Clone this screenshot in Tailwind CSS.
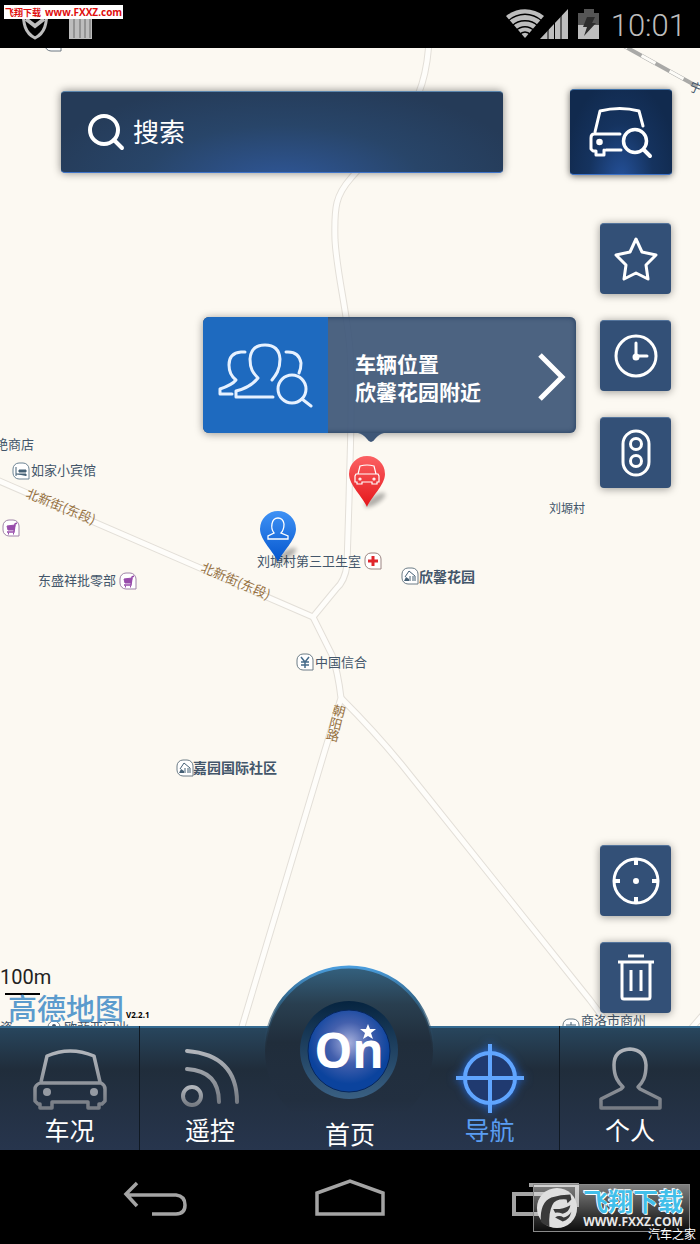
<!DOCTYPE html>
<html lang="zh-CN">
<head>
    <meta charset="UTF-8">
    <meta name="viewport" content="width=device-width, initial-scale=1.0">
    <title>导航</title>
    <script src="https://cdn.jsdelivr.net/npm/@tailwindcss/browser@4"></script>
</head>
<body class="flex min-h-screen flex-col bg-black font-['Roboto','Noto_Sans_CJK_SC',sans-serif] text-white">

    <!-- Status bar -->
    <header class="relative flex h-12 items-center justify-between pr-3.5 pl-5">
        <div class="flex items-center gap-4">
            <svg class="h-10 w-8" viewBox="0 0 32 40" fill="none" stroke="#bdbdbd" stroke-width="3">
                <path d="M3 4 C3 20 5 29 15 34 C25 29 27 20 27 4"/>
                <path d="M6 15 L15 22 L24 15" stroke-width="4"/>
            </svg>
            <svg class="h-10 w-6" viewBox="0 0 24 40">
                <path d="M1 8h23v27H1z" fill="#bdbdbd"/>
                <path d="M6 8v26M12 8v26M17 8v26M22 8v26" stroke="#6a6a6a"/>
            </svg>
        </div>
        <div class="flex items-center gap-1">
            <svg class="-ml-1 h-8 w-[98px]" viewBox="0 0 98 32">
                <path d="M19 30 L0 8 C11 -1 27 -1 38 8 Z" fill="#bdbdbd"/>
                <g fill="none" stroke="#000" stroke-width="1.300">
                    <path d="M2 13 C12 4 26 4 36 13"/>
                    <path d="M6 18 C13 11 25 11 32 18"/>
                    <path d="M10 22.500 C15 17.500 23 17.500 28 22.500"/>
                    <path d="M13 27 C17 23 21 23 25 27"/>
                </g>
                <path d="M34 31 L62 1 V31 Z" fill="#bdbdbd"/>
                <path d="M42 16v16 M48.500 10v22 M55 4v28" stroke="#000"/>
                <path d="M72 5h6V1h10v4h5v12H72z" fill="#555"/>
                <path d="M72 17h21v14H72z" fill="#bdbdbd"/>
                <path d="M81 9h8l-3 6h4L78 28l3-9h-4z" fill="#2c2c2c"/>
            </svg>
            <time class="w-[78px] pt-1 text-right text-[31px] leading-10 font-light text-[#bdbdbd]">10:01</time>
        </div>
        <p class="absolute top-[5px] left-1 flex h-3.5 items-center gap-1 bg-white px-px font-['Open_Sans','Noto_Sans_CJK_SC',sans-serif] text-[10px] leading-none font-bold whitespace-nowrap text-[#e00d0d]">
            <span class="text-[9px]">飞翔下载</span><span>www.FXXZ.com</span>
        </p>
    </header>

    <!-- Map -->
    <main class="relative flex flex-1 flex-col overflow-hidden bg-[#fcf9f2]">
        <svg class="absolute inset-0 h-full w-full" viewBox="0 48 700 978" preserveAspectRatio="xMidYMid slice" font-family="Noto Sans CJK SC, sans-serif" font-size="13" fill="#43566a">
            <defs>
                <g id="roads" fill="none" stroke-linejoin="round">
                    <path d="M429 40 C428 62 425 78 418 95 C402 130 370 155 351 178 C336 195 334 206 335 240 C337 275 347 310 350 350 C353 400 350 450 349 500 L347 565 Q345 581 336 589 L313 617 L-10 477"/>
                    <path d="M313 617 L332 655 Q338 672 341 698 L325 750 L241 1030"/>
                    <path d="M341 698 Q375 732 402 765 L590 1000 L620 1040"/>
                    <path d="M720 995 L690 1030"/>
                </g>
                <path id="badge" d="M7 1h4a6 6 0 0 1 6 6v10H7a6 6 0 0 1-6-6V7a6 6 0 0 1 6-6z" fill="#fff" stroke="currentColor"/>
                <g id="cart" fill="none" stroke="#984cab">
                    <path d="M5 7l8-1-1 5H6z" fill="#984cab"/>
                    <path d="M15 4l-2 1-1 8H5" stroke-width="1.500"/>
                    <path d="M6 14.500h1M11 14.500h1" stroke-width="2"/>
                </g>
                <g id="house">
                    <path d="M4 10l4-6 6 5v5M9 9v5M12 9v5" fill="none" stroke="#456075"/>
                    <path d="M3 14l2-4 3 2v2z" fill="#456075"/>
                </g>
                <linearGradient id="red" x2="0" y2="1"><stop stop-color="#fb6163"/><stop offset="1" stop-color="#e5161b"/></linearGradient>
                <linearGradient id="blue" x2="0" y2="1"><stop stop-color="#3f92f5"/><stop offset="1" stop-color="#0455cd"/></linearGradient>
                <filter id="soft" x="-50%" y="-50%" width="200%" height="200%"><feGaussianBlur stdDeviation="2"/></filter>
            </defs>

            <use href="#roads" stroke="#e3dfd8" stroke-width="7"/>
            <use href="#roads" stroke="#fefdfa" stroke-width="5"/>

            <!-- Railway -->
            <path d="M624 46 L700 88" stroke="#a9a9a7" stroke-width="4"/>
            <path d="M624 46 L700 88" stroke="#fdfcf8" stroke-width="3" stroke-dasharray="16 16" stroke-dashoffset="-20"/>
            <text transform="translate(688 90) rotate(22)">宁</text>

            <g fill="#96713f">
                <text transform="translate(25 497) rotate(22)">北新街(东段)</text>
                <text transform="translate(200 571) rotate(23)">北新街(东段)</text>
                <g transform="translate(339 711) rotate(14)" text-anchor="middle">
                    <text y="5">朝</text><text y="18">阳</text><text y="30">路</text>
                </g>
            </g>

            <use href="#badge" x="44" y="34" color="#6b7680"/>
            <text x="65" y="46">东盛祥批部</text>
            <text x="-5" y="449">艳商店</text>
            <g transform="translate(12 462)">
                <use href="#badge" color="#6d8494"/>
                <path d="M4 5v9M4 12h10v2M7 8h7v2H7z" fill="#456075" stroke="#456075"/>
            </g>
            <text x="31" y="475">如家小宾馆</text>
            <g transform="translate(2 519)"><use href="#badge" color="#a084a8"/><use href="#cart"/></g>
            <g transform="translate(119 572)"><use href="#badge" color="#a084a8"/><use href="#cart"/></g>
            <text x="38" y="585">东盛祥批零部</text>
            <text x="257" y="566">刘塬村第三卫生室</text>
            <g transform="translate(364 552)">
                <use href="#badge" color="#9c8683"/>
                <path d="M9 4v10M4 9h10" stroke="#e0262d" stroke-width="3"/>
            </g>
            <text x="549" y="513" font-size="12">刘塬村</text>
            <g transform="translate(401 567)"><use href="#badge" color="#6d7d87"/><use href="#house"/></g>
            <text x="419" y="582" font-size="14" font-weight="700">欣馨花园</text>
            <g transform="translate(296 653)">
                <use href="#badge" color="#6d7d87"/>
                <path d="M5 4l4 5 4-5M9 9v6M5 9h8M5 12h8" fill="none" stroke="#456b8b" stroke-width="1.500"/>
            </g>
            <text x="315" y="667">中国信合</text>
            <g transform="translate(176 759)"><use href="#badge" color="#6d7d87"/><use href="#house"/></g>
            <text x="193" y="773" font-size="14" font-weight="700">嘉园国际社区</text>
            <text x="0" y="1032">瓷</text>
            <circle cx="54" cy="1027" r="6" fill="#fff" stroke="#6d7d87"/>
            <circle cx="54" cy="1026" r="2"/>
            <text x="64" y="1032">欧菲亚门业</text>
            <g transform="translate(562 1018)">
                <use href="#badge" color="#6d7d87"/>
                <path d="M4 7h10M9 4v3M6 10h6" stroke="#456075"/>
            </g>
            <text x="581" y="1025">商洛市商州</text>

            <!-- My position -->
            <ellipse cx="286" cy="555" rx="12" ry="4" transform="rotate(-32 286 555)" fill="#000" opacity=".3" filter="url(#soft)"/>
            <path d="M278 562 C274 552 260 540 260 529 a18 18 0 0 1 36 0 C296 540 282 552 278 562z" fill="url(#blue)"/>
            <path d="M274 533 C271 529 272 524 272 524 Q273 518 278 518 Q283 518 284 524 Q284 530 281 533 L288 536 V539 H268 V536z" fill="none" stroke="#fff" stroke-width="1.300"/>

            <!-- Vehicle position -->
            <ellipse cx="375" cy="500" rx="12" ry="4" transform="rotate(-32 375 500)" fill="#000" opacity=".3" filter="url(#soft)"/>
            <path d="M367 507 C363 497 349 485 349 474 a18 18 0 0 1 36 0 C385 485 371 497 367 507z" fill="url(#red)"/>
            <g fill="none" stroke="#fff" stroke-width="1.200">
                <path d="M358 474l2-8q7-2 14 0l2 8M356 474h22l1 2v6h-2v2h-5v-2h-10v2h-5v-2h-2v-6z"/>
                <circle cx="360" cy="479" r="1"/><circle cx="374" cy="479" r="1"/>
            </g>
        </svg>

        <!-- Search row -->
        <div class="relative mt-[41px] flex items-center justify-between pr-7 pl-[61px]">
            <form class="mr-[67px] flex h-[82px] flex-1 items-center gap-2 rounded-sm border-t border-b border-t-[#5c86ad] border-b-[#3f74c9] bg-[#28405e] bg-radial-[at_50%_115%] from-[#2f5799] via-[#284569] via-45% to-[#253b58] to-80% pl-[26px] shadow-[0_0_8px_#00000077]">
                <svg class="h-10 w-[38px] shrink-0" viewBox="0 0 38 40" fill="none" stroke="#fff" stroke-width="4" stroke-linecap="round">
                    <circle cx="17" cy="18" r="14"/><path d="M27 28l8 8"/>
                </svg>
                <input type="search" aria-label="搜索" placeholder="搜索" class="h-full min-w-0 flex-1 bg-transparent pt-0.5 text-[26px] text-white outline-none placeholder:text-white">
            </form>
            <button type="button" aria-label="查找车辆" class="flex h-[86px] w-[102px] items-center justify-center rounded-sm border-t border-b border-t-[#3f71a8] border-b-[#3f74c9] bg-[#122c52] bg-radial-[at_50%_110%] from-[#25529c] via-[#15335f] via-45% to-[#112a4e] to-80% shadow-[0_1px_7px_#00000099]">
                <svg class="h-[58px] w-[68px]" viewBox="587 103 68 58" fill="none" stroke="#fff" stroke-width="3" stroke-linecap="round" stroke-linejoin="round">
                    <path d="M595 132l5-21q20-5 39 0l4 15M620 134h-26q-3 0-3 4v11l2 2h3v4h8v-5M606 150h15"/>
                    <circle cx="599.500" cy="142" r="1.800" fill="#fff"/>
                    <circle cx="635" cy="141" r="11.500" stroke-width="3.500"/><path d="M644 150l6 6" stroke-width="4"/>
                </svg>
            </button>
        </div>

        <!-- Map tools -->
        <div class="relative mt-12 mr-[29px] flex flex-col gap-[26px] self-end">
            <button type="button" aria-label="收藏" class="flex size-[71px] items-center justify-center rounded-sm border-t border-[#54749c] bg-[#335077] shadow-[0_1px_8px_#00000066]">
                <svg class="size-12" viewBox="0 0 48 48" fill="none" stroke="#fff" stroke-width="3" stroke-linejoin="round"><path d="M24 4l6 13 14 3-10 10 2 14-12-6-12 6 2-14L4 20l14-3z"/></svg>
            </button>
            <button type="button" aria-label="历史" class="flex size-[71px] items-center justify-center rounded-sm border-t border-[#54749c] bg-[#335077] shadow-[0_1px_8px_#00000066]">
                <svg class="size-12" viewBox="0 0 48 48" fill="none" stroke="#fff" stroke-width="3" stroke-linecap="round"><circle cx="24" cy="24" r="20"/><path d="M24 11v13h11"/><circle cx="24" cy="25" r="2" fill="#fff"/></svg>
            </button>
            <button type="button" aria-label="路况" class="flex size-[71px] items-center justify-center rounded-sm border-t border-[#54749c] bg-[#335077] shadow-[0_1px_8px_#00000066]">
                <svg class="size-12" viewBox="0 0 48 48" fill="none" stroke="#fff" stroke-width="3"><rect x="11" y="2" width="26" height="44" rx="13"/><circle cx="24" cy="15" r="5.500"/><circle cx="24" cy="32" r="5.500"/></svg>
            </button>
        </div>

        <!-- Scale, map logo, lower tools -->
        <div class="relative mt-auto mr-[29px] flex items-end justify-between pb-[13px]">
            <div class="-mb-2">
                <p class="text-xl leading-6 text-[#222]">100m</p>
                <div class="mt-1 ml-[5px] h-0.5 w-[35px] bg-black"></div>
                <p class="-mt-0.5 flex items-end pl-2 text-[29px] leading-7 font-medium text-[#5b9bcd]">
                    <span class="font-['Noto_Sans_CJK_SC',sans-serif]">高德地图</span>
                    <span class="ml-0.5 font-['Open_Sans',sans-serif] text-[8px] leading-3 font-bold text-black">V2.2.1</span>
                </p>
            </div>
            <div class="flex flex-col gap-[26px]">
                <button type="button" aria-label="定位" class="flex size-[71px] items-center justify-center rounded-sm border-t border-[#54749c] bg-[#335077] shadow-[0_1px_8px_#00000066]">
                    <svg class="size-12" viewBox="0 0 48 48" fill="none" stroke="#fff" stroke-width="3"><circle cx="24" cy="24" r="22"/><path d="M24 2v6M24 40v6M2 24h6M40 24h6" stroke-width="4"/><circle cx="24" cy="24" r="2" fill="#fff" stroke-width="2"/></svg>
                </button>
                <button type="button" aria-label="清除" class="flex size-[71px] items-center justify-center rounded-sm border-t border-[#54749c] bg-[#335077] shadow-[0_1px_8px_#00000066]">
                    <svg class="size-12" viewBox="0 0 48 48" fill="none" stroke="#fff" stroke-width="3" stroke-linejoin="round"><path d="M16 2h16M6 8h36M10 8v35q0 2 2 2h24q2 0 2-2V8M19 16v21M29 16v21"/></svg>
                </button>
            </div>
        </div>

        <!-- Vehicle callout -->
        <a href="#" class="absolute top-[269px] left-[203px] flex h-[116px] w-[373px] items-center rounded-md bg-[#3d5677]/92 shadow-[0_1px_9px_#00000066,inset_0_0_5px_#213a5c]">
            <span class="flex h-full w-[125px] items-center justify-center rounded-l-md bg-[#1e6abf]">
                <svg class="h-[66px] w-[98px]" viewBox="0 0 98 66" fill="none" stroke="#e6f1ff" stroke-width="3" stroke-linecap="round" stroke-linejoin="round">
                    <path d="M28 10h-4q-12 1-12 13c0 8 3 12 7 15q-4 5-16 9v5h12"/>
                    <path d="M56 55H19v-6c12-3 18-8 22-13-5-5-8-9-8-19Q34 3 48 3q14 0 15 14c0 11-4 16-8 21"/>
                    <path d="M69 10q13-1 15 11 0 6-2 10"/>
                    <circle cx="75" cy="47" r="14"/><path d="M85 57l9 7"/>
                </svg>
            </span>
            <span class="ml-[27px] flex-1 pt-2 text-[21px] leading-7 font-bold">车辆位置<br>欣馨花园附近</span>
            <svg class="mt-1 mr-2.5 h-12 w-7" viewBox="0 0 28 48" fill="none" stroke="#fff" stroke-width="5"><path d="M2 2l22 22L2 46"/></svg>
            <svg class="absolute top-full left-[155px] h-2.5 w-[26px]" viewBox="0 0 26 10"><path d="M0 0h26q-5 1-9 6-4 6-8 0-4-5-9-6z" fill="#3d5677"/></svg>
        </a>
    </main>

    <!-- Tab bar -->
    <nav class="relative grid h-[124px] grid-cols-5 bg-linear-to-b from-[#28475f] via-[#202d3b] via-35% to-[#27354d] text-[25px] leading-8 shadow-[inset_0_2px_0_#356b91]">
        <svg class="absolute size-0">
            <linearGradient id="metal" x2="0" y2="1"><stop stop-color="#b1b5bb"/><stop offset="1" stop-color="#777c84"/></linearGradient>
        </svg>
        <a href="#" class="flex flex-col items-center justify-end border-r border-[#101923] pb-0.5">
            <svg class="h-[70px] w-[76px]" viewBox="33 1046 76 70" fill="none" stroke="url(#metal)" stroke-width="3.500" stroke-linejoin="round">
                <path d="M42 1082l6-26q23-10 47 0l6 26M41 1083h61q4 2 4 6v12l-3 3h-3v4H89v-6H53v6H41v-4h-2l-3-3v-12q0-4 5-6z"/>
                <g fill="#959aa2" stroke="none"><circle cx="48" cy="1092" r="4"/><circle cx="95" cy="1092" r="4"/></g>
            </svg>
            车况
        </a>
        <a href="#" class="flex flex-col items-center justify-end pb-0.5">
            <svg class="h-[70px] w-[60px]" viewBox="180 1046 60 70" fill="none" stroke="url(#metal)" stroke-width="4" stroke-linecap="round">
                <circle cx="192" cy="1096" r="9"/><path d="M187 1069q32 2 32 33M187 1051q50 4 50 51"/>
            </svg>
            遥控
        </a>
        <a href="#" class="relative z-10 flex flex-col items-center justify-end">
            <svg class="absolute -top-[64px] left-1/2 h-[180px] w-[184px] -translate-x-1/2" viewBox="-91 -89 184 180">
                <defs>
                    <linearGradient id="dome" x2="0" y2="1"><stop stop-color="#34617f"/><stop offset=".22" stop-color="#293f50"/><stop offset=".45" stop-color="#202d3b"/><stop offset=".8" stop-color="#222f40"/><stop offset="1" stop-color="#27354d" stop-opacity="0"/></linearGradient>
                    <linearGradient id="rim" x2="0" y2="1"><stop stop-color="#4a9ddd"/><stop offset=".2" stop-color="#316386"/><stop offset=".5" stop-color="#263b4e" stop-opacity="0"/></linearGradient>
                    <linearGradient id="ring" x2="0" y2="1"><stop stop-color="#062440"/><stop offset="1" stop-color="#3a6083"/></linearGradient>
                    <radialGradient id="ball" cy=".4"><stop stop-color="#a7b1dd"/><stop offset=".5" stop-color="#4460ad"/><stop offset="1" stop-color="#0b439d"/></radialGradient>
                </defs>
                <circle r="84" fill="url(#dome)" stroke="url(#rim)" stroke-width="3"/>
                <circle cy="-1" r="49" fill="url(#ring)"/>
                <circle r="41" fill="url(#ball)" stroke="#06265c"/>
                <text x="0" y="17" text-anchor="middle" font-family="Open Sans, sans-serif" font-size="48" font-weight="700" fill="#fff">On</text>
                <path d="M19-27l2 5 6 0-5 4 2 6-5-3-5 3 2-6-5-4 6 0z" fill="#fff"/>
            </svg>
            <span class="relative -mb-0.5">首页</span>
        </a>
        <a href="#" aria-current="page" class="flex flex-col items-center justify-end border-r border-[#101923] pb-0.5 text-[#5a9df2]">
            <svg class="h-[70px] w-[76px] overflow-visible drop-shadow-[0_0_5px_#2368d8]" viewBox="-38 -32 76 70" fill="none" stroke="#60a5ff" stroke-width="4">
                <circle r="25" fill="#203a70"/><path d="M-34 0h68M0-34v69"/>
            </svg>
            导航
        </a>
        <a href="#" class="flex flex-col items-center justify-end pb-0.5">
            <svg class="h-[70px] w-[66px]" viewBox="597 1046 66 70" fill="none" stroke="url(#metal)" stroke-width="3.500" stroke-linejoin="round">
                <path d="M630 1049q-16 1-16 16c0 12 4 17 9 22l-2 2-20 10v9h59v-9l-20-10-2-2c5-5 8-10 8-22q-1-15-16-16z"/>
            </svg>
            个人
        </a>
    </nav>

    <!-- System buttons -->
    <footer class="relative grid h-[94px] grid-cols-3 items-center justify-items-center px-[58px] pt-1">
        <button type="button" aria-label="返回">
            <svg class="h-10 w-[66px]" viewBox="122 1180 66 40" fill="none" stroke="#a4a4a4" stroke-width="3.500"><path d="M137 1184l-11 11 11 12M126 1196h50q9 1 9 10 0 9-9 9h-24"/></svg>
        </button>
        <button type="button" aria-label="主页">
            <svg class="h-10 w-[72px]" viewBox="314 1180 72 40" fill="none" stroke="#a4a4a4" stroke-width="3.500"><path d="M317 1215v-21l33-12 33 12v21z"/></svg>
        </button>
        <button type="button" aria-label="最近任务">
            <svg class="h-10 w-[70px]" viewBox="511 1180 70 40" fill="none" stroke="#a4a4a4" stroke-width="4"><path d="M515 1195h50v20h-50zM530 1186h48v22"/></svg>
        </button>
        <div class="absolute right-2.5 bottom-3 flex h-12 w-[157px] items-center gap-1 border border-[#8a8a8a] bg-linear-to-b from-white/50 to-white/5 pl-0.5 whitespace-nowrap">
            <svg class="h-[46px] w-[43px] shrink-0" viewBox="0 0 45 46">
                <circle cx="22" cy="23" r="21" fill="#dfdfdf"/>
                <path d="M5 37q-1-20 11-25 10-3 20-3l1 5-4 4-1-4q-12-1-15 6-4 8-3 22-6-1-9-5z" fill="#3a3a3a"/>
                <path d="M18 24q9 1 18-4-1 7-8 9-5-2-8-1zM20 33q4-3 9 0 5-1 8-6-2 9-9 10z" fill="#3a3a3a"/>
            </svg>
            <div class="text-center font-bold">
                <p class="font-['Noto_Sans_CJK_SC',sans-serif] text-[25px] leading-7 text-[#42bfea] [text-shadow:0_0_1px_#fff,1px_1px_0_#fff,-1px_-1px_0_#fff]">飞翔下载</p>
                <p class="font-['Open_Sans',sans-serif] text-[12px] leading-4 text-[#e8e8e8]">WWW.FXXZ.COM</p>
            </div>
        </div>
        <p class="absolute right-1 bottom-0.5 font-['Noto_Sans_CJK_SC',sans-serif] text-xs leading-4">汽车之家</p>
    </footer>
</body>
</html>
